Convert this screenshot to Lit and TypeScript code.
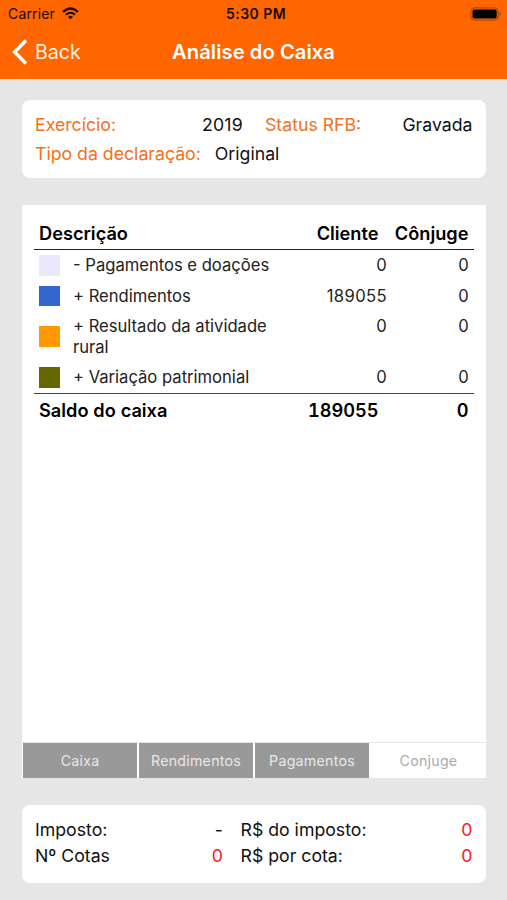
import { LitElement, html, css, svg } from "lit";
import { customElement } from "lit/decorators.js";
import { styleMap } from "lit/directives/style-map.js";

const rows = [
  { color: "#e9e9fb", label: "- Pagamentos e doações", client: "0", spouse: "0" },
  { color: "#3366cc", label: "+ Rendimentos", client: "189055", spouse: "0" },
  { color: "#ff9900", label: "+ Resultado da atividade rural", client: "0", spouse: "0" },
  { color: "#666600", label: "+ Variação patrimonial", client: "0", spouse: "0" },
];

const wifi = svg`
  <path d="M1 4.9Q8.5-2 16 4.9" stroke-width="2.3"/>
  <path d="M3.9 7.8Q8.5 3.7 13.1 7.8" stroke-width="2.1"/>
  <path d="M6 9.7Q8.5 7.6 11 9.7L8.5 12.2Z" fill="#200c00" stroke="none"/>`;

@customElement("app-root")
export class AppRoot extends LitElement {
  static styles = css`
    :host {
      display: flex;
      flex-direction: column;
      box-sizing: border-box;
      height: 900px;
      overflow: hidden;
      background: #e6e6e6;
      color: #111;
      font-family: Inter, "Liberation Sans", sans-serif;
      white-space: nowrap;
    }
    .top { background: #ff6600; height: 79px; flex: none; }
    .status {
      display: grid;
      grid-template-columns: 1fr auto 1fr;
      align-items: center;
      height: 27px;
      padding: 0 5px 0 8px;
      color: #200c00;
      font-size: 14px;
    }
    .carrier { display: flex; align-items: center; gap: 7px; letter-spacing: 0.15px; }
    .wifi { width: 17px; height: 13px; fill: none; stroke: #200c00; }
    .time { font-weight: 600; font-size: 14px; letter-spacing: 0.45px; margin-left: 2px; }
    .battery { justify-self: end; width: 32px; height: 14px; display: block; }
    .nav {
      display: grid;
      grid-template-columns: 1fr auto 1fr;
      align-items: center;
      height: 50px;
      padding: 0 12px;
      color: #fff;
      font-size: 19.6px;
    }
    .back { display: flex; align-items: center; gap: 7px; color: #fff0e5; }
    .chevron { width: 16px; height: 26px; fill: none; stroke: #fff; stroke-width: 3.4; }
    .title { font-weight: 600; font-size: 20.2px; line-height: 24px; letter-spacing: 0.05px; margin-bottom: 1px; }
    .card {
      box-sizing: border-box;
      flex: none;
      height: 78px;
      margin: 0 21px 0 22px;
      border-radius: 8px;
      background: #fff;
      padding: 10px 13.5px 0 13px;
      font-size: 17.7px;
    }
    .info { margin-top: 21px; }
    .line { display: flex; height: 29px; line-height: 29px; }
    .key { color: #f37021; }
    .year { width: 208px; display: flex; justify-content: space-between; }
    .state { flex: 1; display: flex; justify-content: space-between; margin-left: 22px; }
    .number { letter-spacing: 0.25px; }
    .kind { margin-left: 14px; }
    .panel {
      flex: none;
      display: flex;
      flex-direction: column;
      height: 573px;
      margin: 27px 21px 27px 22px;
      background: #fff;
    }
    .table { flex: 1; padding: 12px 12px 0; font-size: 16.6px; }
    .head, .total {
      display: grid;
      grid-template-columns: 1fr 100px 90px;
      padding: 0 5.5px 0 5px;
      height: 32px;
      line-height: 33px;
      font-size: 18.2px;
      font-weight: 600;
      font-variant-numeric: tabular-nums;
      color: #000;
    }
    .head { border-bottom: 1px solid #222; }
    .total { border-top: 1.5px solid #444; }
    .row {
      display: grid;
      grid-template-columns: 34px 210px 1fr 82px;
      padding: 5px;
      line-height: 20.5px;
      color: #222;
    }
    .row .num { letter-spacing: 0.4px; }
    .swatch { width: 21px; height: 20.5px; align-self: center; }
    .label { white-space: normal; }
    .num { text-align: right; }
    .tabs {
      display: grid;
      grid-template-columns: 114px 114px 114px 1fr;
      gap: 2px;
      height: 35px;
      border: solid #e6e6e6;
      border-width: 1px 0 0;
      padding-left: 1px;
      font-size: 14.2px;
      letter-spacing: 0.25px;
      line-height: 36px;
      text-align: center;
    }
    .tab { background: #999; color: #e8e8e8; height: 35px; }
    .tab.off { background: #fff; color: #aaa; }
    .tax { padding-top: 12px; }
    .tax .line { height: 26px; line-height: 26px; }
    .tax .year { width: 188px; }
    .tax .state { margin-left: 17.5px; }
    .red { color: #f3201c; }
  `;

  render() {
    return html`
      <div class="top">
        <div class="status">
          <div class="carrier"><span class="net">Carrier</span>
            <svg class="wifi" viewBox="0 0 17 13">${wifi}</svg>
          </div>
          <span class="time">5:30 PM</span>
          <svg class="battery" viewBox="0 0 32 14">
            <rect x=".9" y=".9" width="27.4" height="12.2" rx="3.6" fill="none" stroke="#a34200"/>
            <rect x="2.5" y="2.5" width="24.2" height="9" rx="1.8" fill="#000"/>
            <path d="M29.6 4.8Q32 7 29.6 9.2Z" fill="#a34200"/>
          </svg>
        </div>
        <div class="nav">
          <div class="back">
            <svg class="chevron" viewBox="0 0 16 26"><path d="M14 1.5 2.6 13 14 24.5"/></svg>
            <span class="backtext">Back</span>
          </div>
          <span class="title">Análise do Caixa</span>
        </div>
      </div>
      <div class="card info">
        <div class="line">
          <div class="year"><span class="key">Exercício:</span><span class="number">2019</span></div>
          <div class="state"><span class="key">Status RFB:</span><span>Gravada</span></div>
        </div>
        <div class="line"><span class="key">Tipo da declaração:</span><span class="kind">Original</span></div>
      </div>
      <div class="panel">
        <div class="table">
          <div class="head"><span>Descrição</span><span class="num">Cliente</span><span class="num">Cônjuge</span></div>
          ${rows.map(
            (r) => html`<div class="row">
              <span class="swatch" style=${styleMap({ background: r.color })}></span>
              <span class="label">${r.label}</span>
              <span class="num">${r.client}</span>
              <span class="num">${r.spouse}</span>
            </div>`
          )}
          <div class="total"><span>Saldo do caixa</span><span class="num">189055</span><span class="num">0</span></div>
        </div>
        <div class="tabs">
          <div class="tab">Caixa</div>
          <div class="tab">Rendimentos</div>
          <div class="tab">Pagamentos</div>
          <div class="tab off">Conjuge</div>
        </div>
      </div>
      <div class="card tax">
        <div class="line">
          <div class="year"><span>Imposto:</span><span>-</span></div>
          <div class="state"><span>R$ do imposto:</span><span class="red">0</span></div>
        </div>
        <div class="line">
          <div class="year"><span>Nº Cotas</span><span class="red">0</span></div>
          <div class="state"><span>R$ por cota:</span><span class="red">0</span></div>
        </div>
      </div>
    `;
  }
}
